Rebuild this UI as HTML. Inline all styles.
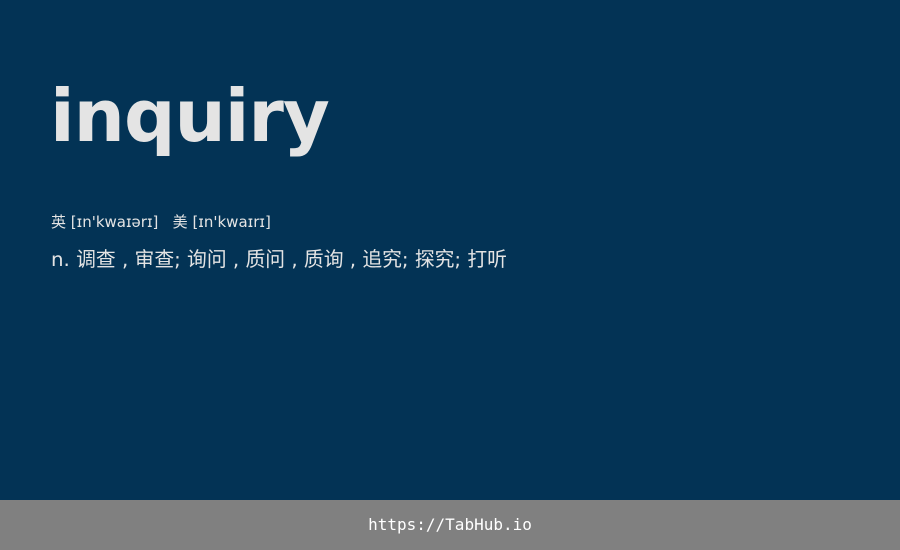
<!DOCTYPE html>
<html><head><meta charset="utf-8"><style>
html,body{margin:0;padding:0}
body{width:900px;height:550px;background:#033355;position:relative;overflow:hidden;font-family:"DejaVu Sans","Noto Sans CJK SC",sans-serif;color:#e4e4e4}
.w{position:absolute;left:50px;top:80px;font-family:"DejaVu Sans",sans-serif;font-size:72px;font-weight:bold;line-height:72px;letter-spacing:-1px;color:#e4e4e4}
.p{position:absolute;left:51px;top:212px;font-size:15px;line-height:20px;white-space:pre}
.d{position:absolute;left:51px;top:247px;font-size:19.8px;line-height:26px;white-space:pre}
.f{position:absolute;left:0;top:500px;width:900px;height:50px;background:#808080;color:#fff;font-family:"DejaVu Sans Mono",monospace;font-size:16px;line-height:50px;text-align:center}
</style></head><body>
<div class="w">inquiry</div>
<div class="p">英 [ɪn'kwaɪərɪ]   美 [ɪn'kwaɪrɪ]</div>
<div class="d">n. 调查 , 审查; 询问 , 质问 , 质询 , 追究; 探究; 打听</div>
<div class="f">https://TabHub.io</div>
</body></html>
